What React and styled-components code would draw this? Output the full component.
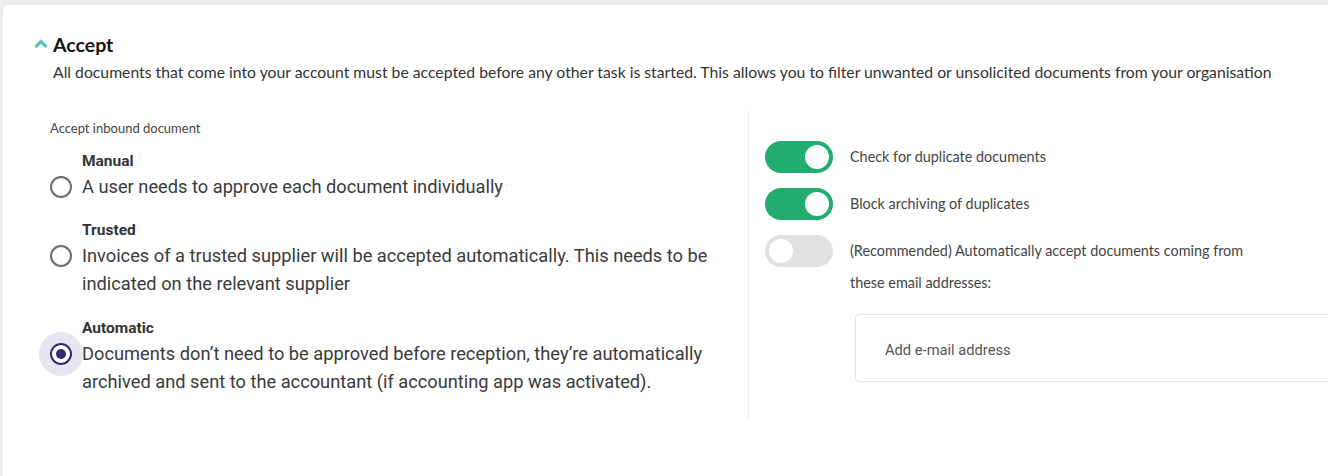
import React, { useState } from "react";
import styled, { createGlobalStyle } from "styled-components";

const GlobalStyle = createGlobalStyle`
  html, body {
    margin: 0;
    overflow: hidden;
    background: #ececec;
  }
  body {
    padding: 5px 0 0 3px;
  }
`;

const options = [
  {
    id: "manual",
    title: "Manual",
    text: "A user needs to approve each document individually",
  },
  {
    id: "trusted",
    title: "Trusted",
    text: "Invoices of a trusted supplier will be accepted automatically. This needs to be indicated on the relevant supplier",
  },
  {
    id: "automatic",
    title: "Automatic",
    text: "Documents don’t need to be approved before reception, they’re automatically archived and sent to the accountant (if accounting app was activated).",
  },
];

function App() {
  const [mode, setMode] = useState("automatic");
  const [dup, setDup] = useState(true);
  const [block, setBlock] = useState(true);
  const [auto, setAuto] = useState(false);

  return (
    <>
      <GlobalStyle />
      <Card>
        <Header>
          <svg width="14" height="10" viewBox="0 0 14 10">
            <path
              d="M1.5 8 L7 2.5 L12.5 8"
              fill="none"
              stroke="#5dc2bc"
              strokeWidth="3.2"
            />
          </svg>
          <h2>Accept</h2>
        </Header>
        <Intro>
          All documents that come into your account must be accepted before any
          other task is started. This allows you to filter unwanted or
          unsolicited documents from your organisation
        </Intro>
        <Body>
          <LeftCol>
            <FieldLabel>Accept inbound document</FieldLabel>
            {options.map((o) => (
              <Option key={o.id} onClick={() => setMode(o.id)}>
                <OptionTitle>{o.title}</OptionTitle>
                <RadioCell>
                  <Radio $checked={mode === o.id} />
                </RadioCell>
                <OptionText>{o.text}</OptionText>
              </Option>
            ))}
          </LeftCol>
          <RightCol>
            <ToggleRow>
              <Toggle $on={dup} onClick={() => setDup(!dup)} />
              <ToggleLabel>Check for duplicate documents</ToggleLabel>
            </ToggleRow>
            <ToggleRow>
              <Toggle $on={block} onClick={() => setBlock(!block)} />
              <ToggleLabel>Block archiving of duplicates</ToggleLabel>
            </ToggleRow>
            <ToggleRow>
              <Toggle $on={auto} onClick={() => setAuto(!auto)} />
              <ToggleLabel>
                (Recommended) Automatically accept documents coming from these
                email addresses:
              </ToggleLabel>
            </ToggleRow>
            <EmailInput placeholder="Add e-mail address" />
          </RightCol>
        </Body>
      </Card>
    </>
  );
}

export default App;

const Card = styled.div`
  background: #fff;
  border-radius: 6px 0 0 0;
  margin-right: -20px;
  height: 480px;
  padding-top: 28px;
  box-sizing: border-box;
  font-family: "Lato", sans-serif;
`;

const Header = styled.div`
  display: flex;
  align-items: center;
  gap: 5px;
  padding-left: 31px;
  h2 {
    margin: 0;
    font-size: 19.5px;
    line-height: 24px;
    font-weight: 700;
    color: #151515;
  }
  svg {
    margin-top: -3px;
  }
`;

const Intro = styled.p`
  margin: 5px 0 0 50px;
  font-size: 15.75px;
  line-height: 20px;
  color: #333;
`;

const Body = styled.div`
  display: grid;
  grid-template-columns: 709px 1fr;
  margin: 28px 0 0 36px;
`;

const LeftCol = styled.div`
  padding: 10px 20px 25px 0;
`;

const FieldLabel = styled.div`
  margin-left: 11px;
  font-size: 13px;
  line-height: 16px;
  color: #444;
  margin-bottom: 15px;
`;

const Option = styled.div`
  display: grid;
  grid-template-columns: 43px 1fr;
  font-family: "Roboto", sans-serif;
  cursor: pointer;
  & + & {
    margin-top: 19px;
  }
  &:last-child {
    margin-top: 20px;
  }
`;

const OptionTitle = styled.div`
  grid-column: 2;
  font-size: 15.5px;
  line-height: 20px;
  font-weight: 700;
  color: #333;
  margin-bottom: 2px;
`;

const RadioCell = styled.div`
  grid-column: 1;
  height: 28px;
  display: flex;
  align-items: center;
  justify-content: center;
`;

const Radio = styled.span`
  box-sizing: border-box;
  width: 22px;
  height: 22px;
  border-radius: 50%;
  border: 2px solid ${(p) => (p.$checked ? "#2d2a78" : "#6b6b6b")};
  box-shadow: ${(p) => (p.$checked ? "0 0 0 11px #e7e5f0" : "none")};
  display: flex;
  align-items: center;
  justify-content: center;
  &::after {
    content: "";
    display: ${(p) => (p.$checked ? "block" : "none")};
    width: 10px;
    height: 10px;
    border-radius: 50%;
    background: #2d2a78;
  }
`;

const OptionText = styled.div`
  grid-column: 2;
  font-size: 18.25px;
  line-height: 28px;
  color: #3a3a3a;
`;

const RightCol = styled.div`
  border-left: 1px solid #ededed;
  padding: 31px 0 0 16px;
`;

const ToggleRow = styled.div`
  display: flex;
  align-items: flex-start;
  gap: 17px;
  margin-bottom: 15px;
`;

const Toggle = styled.button`
  position: relative;
  flex: none;
  width: 68px;
  height: 32px;
  padding: 0;
  border: none;
  border-radius: 16px;
  background: ${(p) => (p.$on ? "#21ad6f" : "#e1e1e1")};
  cursor: pointer;
  &::after {
    content: "";
    position: absolute;
    top: 4px;
    left: ${(p) => (p.$on ? "40px" : "4px")};
    width: 24px;
    height: 24px;
    border-radius: 50%;
    background: #fff;
  }
`;

const ToggleLabel = styled.div`
  max-width: 420px;
  font-size: 14.4px;
  line-height: 32px;
  color: #444;
`;

const EmailInput = styled.input`
  display: block;
  box-sizing: border-box;
  width: calc(100% - 90px);
  height: 68px;
  margin: 1px 0 0 90px;
  padding: 3px 29px 0;
  border: 1px solid #e6e6e6;
  border-radius: 4px;
  font-family: "Roboto", sans-serif;
  font-size: 14.7px;
  outline: none;
  &::placeholder {
    color: #555;
  }
`;
